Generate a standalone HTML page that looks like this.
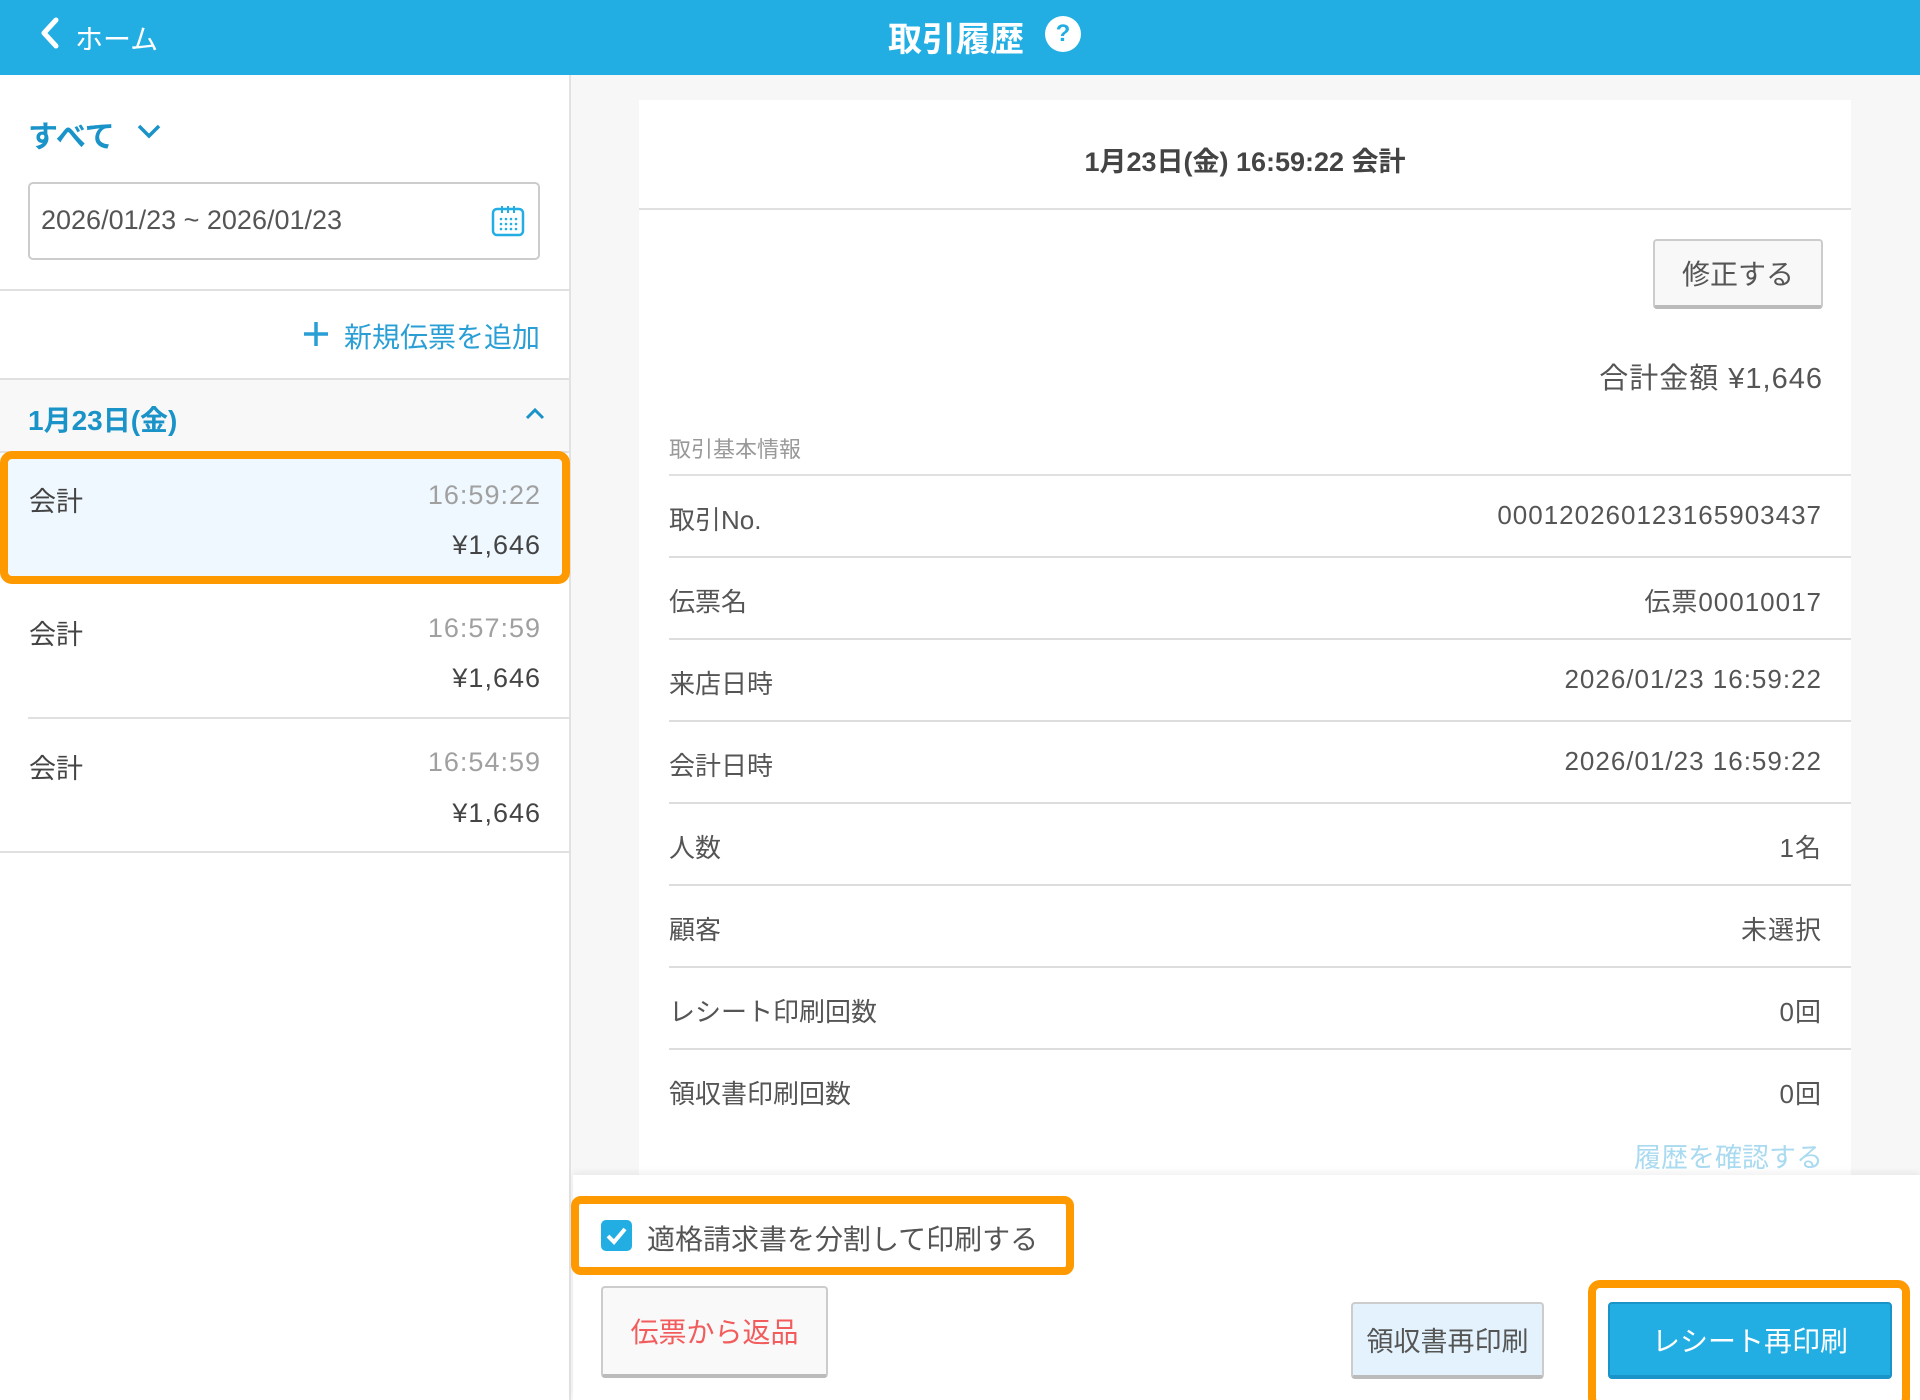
<!DOCTYPE html>
<html><head><meta charset="utf-8"><style>
*{box-sizing:border-box;margin:0;padding:0}
html,body{width:1920px;height:1400px;overflow:hidden}
body{background:#f7f7f7;font-family:"Liberation Sans","Noto Sans CJK JP",sans-serif;color:#444;position:relative}
.a{position:absolute}
.hdr{left:0;top:0;width:1920px;height:75px;background:#22aee3}
.left{left:0;top:75px;width:571px;height:1325px;background:#fff;border-right:2px solid #e2e2e2}
.hl{height:2px;background:#e0e0e0}
.blue{color:#1a93c9}
.row{left:669px;width:1182px;height:82px;border-bottom:2px solid #ddd;font-size:26px;color:#555}
.row span{position:absolute;top:24px}
.row .r{right:29px;color:#555;letter-spacing:1px}
.btn{border:2px solid #ccc;border-bottom:4px solid #bbb;border-radius:4px;font-size:28px;display:flex;align-items:center;justify-content:center}
.num{letter-spacing:1px}
</style></head><body>
<div class="a hdr"></div>
<svg class="a" style="left:38px;top:16px" width="24" height="34" viewBox="0 0 24 34"><path d="M18 4L6 17l12 13" fill="none" stroke="#fff" stroke-width="5" stroke-linecap="round" stroke-linejoin="round"/></svg>
<div class="a" style="left:75px;top:18px;font-size:28px;color:#fff">ホーム</div>
<div class="a" style="left:888px;top:12px;font-size:34px;color:#fff;font-weight:bold">取引履歴</div>
<div class="a" style="left:1045px;top:16px;width:36px;height:36px;border-radius:50%;background:#fff;color:#22aee3;font-weight:bold;font-size:24px;text-align:center;line-height:36px">?</div>

<div class="a left"></div>
<div class="a blue" style="left:28px;top:112px;font-size:30px;font-weight:bold">すべて</div>
<svg class="a" style="left:136px;top:122px" width="26" height="18" viewBox="0 0 26 18"><path d="M3 4l10 10 10-10" fill="none" stroke="#1a93c9" stroke-width="3.5"/></svg>
<div class="a" style="left:28px;top:182px;width:512px;height:78px;border:2px solid #ccc;border-radius:5px"></div>
<div class="a" style="left:41px;top:205px;font-size:27px;color:#555">2026/01/23 ~ 2026/01/23</div>
<svg class="a" style="left:491px;top:204px" width="34" height="34" viewBox="0 0 34 34"><rect x="2" y="5" width="30" height="26" rx="4" fill="none" stroke="#22aee3" stroke-width="2.5"/><path d="M11 2v7M17 2v7M23 2v7" stroke="#22aee3" stroke-width="2"/><g fill="#22aee3"><circle cx="10" cy="15" r="1.3"/><circle cx="15" cy="15" r="1.3"/><circle cx="20" cy="15" r="1.3"/><circle cx="25" cy="15" r="1.3"/><circle cx="10" cy="20" r="1.3"/><circle cx="15" cy="20" r="1.3"/><circle cx="20" cy="20" r="1.3"/><circle cx="25" cy="20" r="1.3"/><circle cx="10" cy="25" r="1.3"/><circle cx="15" cy="25" r="1.3"/><circle cx="20" cy="25" r="1.3"/><circle cx="25" cy="25" r="1.3"/></g></svg>
<div class="a hl" style="left:0;top:289px;width:571px"></div>
<svg class="a" style="left:302px;top:320px" width="28" height="28" viewBox="0 0 28 28"><path d="M14 2v24M2 14h24" stroke="#2a9fd6" stroke-width="3.5"/></svg>
<div class="a" style="left:340px;top:316px;width:200px;text-align:right;font-size:28px;color:#2a9fd6">新規伝票を追加</div>
<div class="a" style="left:0;top:378px;width:569px;height:75px;background:#f8f8f8;border-top:2px solid #e0e0e0;border-bottom:2px solid #e0e0e0"></div>
<div class="a blue" style="left:28px;top:399px;font-size:28px;font-weight:bold">1月23日(金)</div>
<svg class="a" style="left:524px;top:405px" width="22" height="16" viewBox="0 0 22 16"><path d="M3 13l8-8 8 8" fill="none" stroke="#1a93c9" stroke-width="3"/></svg>

<div class="a" style="left:0;top:451px;width:570px;height:133px;border:8px solid #ff9900;border-radius:12px;background:#eff8fe"></div>
<div class="a" style="left:29px;top:480px;font-size:27px">会計</div>
<div class="a num" style="left:380px;top:480px;width:161px;text-align:right;font-size:27px;color:#a0a0a0">16:59:22</div>
<div class="a num" style="left:380px;top:530px;width:161px;text-align:right;font-size:27px">¥1,646</div>
<div class="a" style="left:29px;top:613px;font-size:27px">会計</div>
<div class="a num" style="left:380px;top:613px;width:161px;text-align:right;font-size:27px;color:#a0a0a0">16:57:59</div>
<div class="a num" style="left:380px;top:663px;width:161px;text-align:right;font-size:27px">¥1,646</div>
<div class="a hl" style="left:28px;top:717px;width:543px"></div>
<div class="a" style="left:29px;top:747px;font-size:27px">会計</div>
<div class="a num" style="left:380px;top:747px;width:161px;text-align:right;font-size:27px;color:#a0a0a0">16:54:59</div>
<div class="a num" style="left:380px;top:798px;width:161px;text-align:right;font-size:27px">¥1,646</div>
<div class="a hl" style="left:0;top:851px;width:571px"></div>

<div class="a" style="left:639px;top:100px;width:1212px;height:1075px;background:#fff"></div>
<div class="a" style="left:639px;top:140px;width:1212px;text-align:center;font-size:27px;font-weight:bold;color:#444">1月23日(金) 16:59:22 会計</div>
<div class="a hl" style="left:639px;top:208px;width:1212px"></div>
<div class="a btn" style="left:1653px;top:239px;width:170px;height:70px;background:#f8f8f8;color:#555">修正する</div>
<div class="a" style="left:1400px;top:355px;width:423px;text-align:right;font-size:29px;color:#555;letter-spacing:1px">合計金額 ¥1,646</div>
<div class="a" style="left:669px;top:432px;font-size:22px;color:#999">取引基本情報</div>
<div class="a hl" style="left:669px;top:474px;width:1182px"></div>
<div class="a row" style="top:476px"><span>取引No.</span><span class="r">0001202601231659034​37</span></div>
<div class="a row" style="top:558px"><span>伝票名</span><span class="r">伝票00010017</span></div>
<div class="a row" style="top:640px"><span>来店日時</span><span class="r">2026/01/23 16:59:22</span></div>
<div class="a row" style="top:722px"><span>会計日時</span><span class="r">2026/01/23 16:59:22</span></div>
<div class="a row" style="top:804px"><span>人数</span><span class="r">1名</span></div>
<div class="a row" style="top:886px"><span>顧客</span><span class="r">未選択</span></div>
<div class="a row" style="top:968px"><span>レシート印刷回数</span><span class="r">0回</span></div>
<div class="a row" style="top:1050px;border-bottom:none"><span>領収書印刷回数</span><span class="r">0回</span></div>
<div class="a" style="left:1500px;top:1136px;width:323px;text-align:right;font-size:27px;color:#a9daf0">履歴を確認する</div>

<div class="a" style="left:573px;top:1175px;width:1347px;height:225px;background:#fff;box-shadow:0 -3px 6px rgba(0,0,0,.06)"></div>
<div class="a" style="left:571px;top:1196px;width:503px;height:79px;border:8px solid #ff9900;border-radius:10px;background:#fff"></div>
<div class="a" style="left:601px;top:1220px;width:31px;height:31px;border-radius:5px;background:#22aee3"></div>
<svg class="a" style="left:601px;top:1220px" width="31" height="31" viewBox="0 0 31 31"><path d="M7 16l6 6 11-13" fill="none" stroke="#fff" stroke-width="4"/></svg>
<div class="a" style="left:647px;top:1218px;font-size:28px;color:#555">適格請求書を分割して印刷する</div>
<div class="a btn" style="left:601px;top:1286px;width:227px;height:92px;background:#f9f9f9;color:#f25c5c">伝票から返品</div>
<div class="a btn" style="left:1351px;top:1302px;width:193px;height:77px;background:#e3f2fd;color:#555;font-size:27px">領収書再印刷</div>
<div class="a" style="left:1588px;top:1280px;width:322px;height:130px;border:8px solid #ff9900;border-radius:12px;background:#fff"></div>
<div class="a btn" style="left:1608px;top:1302px;width:284px;height:77px;background:#22aee3;border-color:#1a93c9;color:#fff">レシート再印刷</div>
</body></html>
